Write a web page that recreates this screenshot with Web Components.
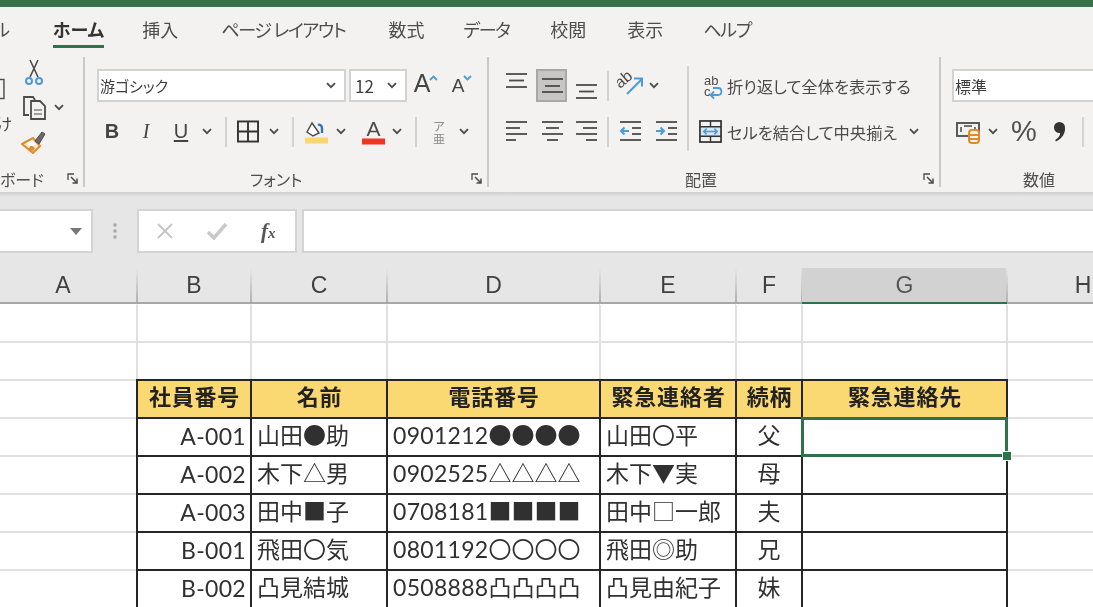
<!DOCTYPE html>
<html lang="ja"><head><meta charset="utf-8"><title>Excel</title>
<style>
html,body{margin:0;padding:0;background:#fff;overflow:hidden}
body{font-family:"Noto Sans CJK JP","Noto Sans",sans-serif;color:#444;width:1093px;height:607px;font-feature-settings:"palt"}
</style></head><body>
<xl-app>
  <xl-tabs>
    <xl-tab ml="-7">ル</xl-tab><xl-tab ml="43" active>ホーム</xl-tab><xl-tab ml="38">挿入</xl-tab><xl-tab ml="43" style="letter-spacing:-1.300px">ページ レイアウト</xl-tab><xl-tab ml="43">数式</xl-tab><xl-tab ml="39" style="letter-spacing:-1.5px">データ</xl-tab><xl-tab ml="41">校閲</xl-tab><xl-tab ml="41">表示</xl-tab><xl-tab ml="40" style="letter-spacing:-1.300px">ヘルプ</xl-tab>
  </xl-tabs>
  <xl-ribbon>
    <xl-group w="83" label="ボード" lx="0">
      <xl-row style="margin-top:-13px;align-items:flex-start">
        <xl-stack w="19">
          <xl-tool w="19" h="66" icon="paste" style="justify-content:flex-start"></xl-tool>
          <xl-tool w="19" h="30" style="justify-content:flex-end;margin-top:-14px"><span style="font-size:16px;margin-right:7px">け</span></xl-tool>
        </xl-stack>
        <xl-stack w="30">
          <xl-tool w="30" h="34" icon="scissors"></xl-tool>
          <xl-tool w="30" h="35" icon="copy"></xl-tool>
          <xl-tool w="30" h="34" icon="brush"></xl-tool>
        </xl-stack>
        <xl-tool w="10" h="35" icon="chev" style="margin-top:34px;margin-left:5px"></xl-tool>
      </xl-row>
    </xl-group>
    <xl-sep kind="group"></xl-sep>
    <xl-group w="402" label="フォント" lx="165">
      <xl-row>
        <xl-field w="249" ml="12" tight style="font-size:15px" chev>游ゴシック</xl-field>
        <xl-field w="58" ml="3" style="font-size:17px" chev>12</xl-field>
        <xl-tool w="36"><span style="font:25px 'Liberation Sans';margin:-4px 0 0 2px">A</span><xl-icon name="up"></xl-icon></xl-tool>
        <xl-tool w="36"><span style="font:19px 'Liberation Sans';margin:1px 0 0 2px">A</span><xl-icon name="down"></xl-icon></xl-tool>
      </xl-row>
      <xl-row>
        <xl-tool w="34" ml="10"><b style="font:bold 20px 'Liberation Sans'">B</b></xl-tool>
        <xl-tool w="34"><i style="font:italic 20px 'Liberation Serif'">I</i></xl-tool>
        <xl-tool w="36"><u style="font:20px 'Liberation Sans';text-underline-offset:2px">U</u></xl-tool>
        <xl-tool w="16" icon="chev"></xl-tool>
        <xl-tool w="8" ml="7"><xl-sep></xl-sep></xl-tool>
        <xl-tool w="22" ml="7" icon="borders"></xl-tool>
        <xl-tool w="30" icon="chev"></xl-tool>
        <xl-tool w="8"><xl-sep></xl-sep></xl-tool>
        <xl-tool w="38" icon="fill"></xl-tool>
        <xl-tool w="12" icon="chev"></xl-tool>
        <xl-tool w="36" ml="8" icon="color"></xl-tool>
        <xl-tool w="12" icon="chev"></xl-tool>
        <xl-tool w="8" ml="9"><xl-sep></xl-sep></xl-tool>
        <xl-tool w="30" ml="4"><span style="display:flex;flex-direction:column;align-items:center;font-size:12px;line-height:13px;color:#8a8a8a"><span>ア</span><span>亜</span></span></xl-tool>
        <xl-tool w="12" ml="4" icon="chev"></xl-tool>
      </xl-row>
    </xl-group>
    <xl-sep kind="group"></xl-sep>
    <xl-group w="450" label="配置" lx="196">
      <xl-row style="align-items:flex-start">
        <xl-stack w="198" gap="13">
          <xl-row>
            <xl-tool w="30" ml="12" icon="vtop"></xl-tool>
            <xl-tool w="31" ml="5" icon="vmid" sel></xl-tool>
            <xl-tool w="30" ml="4" icon="vbot"></xl-tool>
            <xl-tool w="8" ml="3"><xl-sep></xl-sep></xl-tool>
            <xl-tool w="30" ml="5" icon="orient"></xl-tool>
            <xl-tool w="12" ml="1" icon="chev"></xl-tool>
          </xl-row>
          <xl-row>
            <xl-tool w="30" ml="12" icon="hleft"></xl-tool>
            <xl-tool w="31" ml="5" icon="hmid"></xl-tool>
            <xl-tool w="30" ml="4" icon="hright"></xl-tool>
            <xl-tool w="8" ml="3"><xl-sep></xl-sep></xl-tool>
            <xl-tool w="30" ml="3" icon="outdent"></xl-tool>
            <xl-tool w="30" ml="6" icon="indent"></xl-tool>
          </xl-row>
        </xl-stack>
        <xl-sep kind="tall"></xl-sep>
        <xl-stack w="240" gap="13">
          <xl-row>
            <xl-tool w="28" ml="9" icon="wrap"></xl-tool>
            <xl-label ml="1">折り返して全体を表示する</xl-label>
          </xl-row>
          <xl-row>
            <xl-tool w="28" ml="7" icon="merge"></xl-tool>
            <xl-label ml="3">セルを結合して中央揃え</xl-label>
            <xl-tool w="12" ml="11" icon="chev"></xl-tool>
          </xl-row>
        </xl-stack>
      </xl-row>
    </xl-group>
    <xl-sep kind="group"></xl-sep>
    <xl-group w="152" label="数値" lx="82" nolaunch>
      <xl-row>
        <xl-field w="200" ml="11" tight style="font-size:16px">標準</xl-field>
      </xl-row>
      <xl-row>
        <xl-tool w="26" ml="15" icon="money"></xl-tool>
        <xl-tool w="12" ml="5" icon="chev"></xl-tool>
        <xl-tool w="36" ml="7"><span style="font:29px 'Liberation Sans';color:#505050">%</span></xl-tool>
        <xl-tool w="28" ml="4" icon="comma"></xl-tool>
        <xl-tool w="8" ml="5"><xl-sep></xl-sep></xl-tool>
      </xl-row>
    </xl-group>
  </xl-ribbon>
  <xl-formula></xl-formula>
  <xl-colhead></xl-colhead>
  <xl-sheet>
    <xl-cell></xl-cell><xl-cell></xl-cell><xl-cell></xl-cell><xl-cell></xl-cell><xl-cell></xl-cell><xl-cell></xl-cell><xl-cell></xl-cell><xl-cell></xl-cell>
    <xl-cell></xl-cell><xl-cell></xl-cell><xl-cell></xl-cell><xl-cell></xl-cell><xl-cell></xl-cell><xl-cell></xl-cell><xl-cell></xl-cell><xl-cell></xl-cell>

    <xl-cell></xl-cell><xl-cell k="h">社員番号</xl-cell><xl-cell k="h">名前</xl-cell><xl-cell k="h">電話番号</xl-cell><xl-cell k="h">緊急連絡者</xl-cell><xl-cell k="h">続柄</xl-cell><xl-cell k="h">緊急連絡先</xl-cell><xl-cell></xl-cell>

    <xl-cell></xl-cell><xl-cell k="r"><xl-d>A-001</xl-d></xl-cell><xl-cell k="l">山田●助</xl-cell><xl-cell k="l"><xl-d>0901212</xl-d>●●●●</xl-cell><xl-cell k="l">山田〇平</xl-cell><xl-cell k="c">父</xl-cell><xl-cell k="l" selected></xl-cell><xl-cell></xl-cell>
    <xl-cell></xl-cell><xl-cell k="r"><xl-d>A-002</xl-d></xl-cell><xl-cell k="l">木下△男</xl-cell><xl-cell k="l"><xl-d>0902525</xl-d>△△△△</xl-cell><xl-cell k="l">木下▼実</xl-cell><xl-cell k="c">母</xl-cell><xl-cell k="l"></xl-cell><xl-cell></xl-cell>
    <xl-cell></xl-cell><xl-cell k="r"><xl-d>A-003</xl-d></xl-cell><xl-cell k="l">田中■子</xl-cell><xl-cell k="l"><xl-d>0708181</xl-d>■■■■</xl-cell><xl-cell k="l">田中□一郎</xl-cell><xl-cell k="c">夫</xl-cell><xl-cell k="l"></xl-cell><xl-cell></xl-cell>
    <xl-cell></xl-cell><xl-cell k="r"><xl-d>B-001</xl-d></xl-cell><xl-cell k="l">飛田〇気</xl-cell><xl-cell k="l"><xl-d>0801192</xl-d>〇〇〇〇</xl-cell><xl-cell k="l">飛田◎助</xl-cell><xl-cell k="c">兄</xl-cell><xl-cell k="l"></xl-cell><xl-cell></xl-cell>
    <xl-cell></xl-cell><xl-cell k="r"><xl-d>B-002</xl-d></xl-cell><xl-cell k="l">凸見結城</xl-cell><xl-cell k="l"><xl-d>0508888</xl-d>凸凸凸凸</xl-cell><xl-cell k="l">凸見由紀子</xl-cell><xl-cell k="c">妹</xl-cell><xl-cell k="l"></xl-cell><xl-cell></xl-cell>
  </xl-sheet>
</xl-app>
<script>
const L='#4b4b4b',B='#4a9bd8',O='#e08a2c';
const lines=(ys)=>ys.map(([x1,x2,y])=>`<path d="M${x1} ${y}H${x2}"/>`).join('');
const svg=(w,h,body,extra='')=>`<svg width="${w}" height="${h}" viewBox="0 0 ${w} ${h}" fill="none" stroke="${L}" stroke-width="1.8" ${extra}>${body}</svg>`;
const ICONS={
 chev:svg(10,7,'<path d="M1 1.2l4 4 4-4"/>'),
 up:svg(9,6,`<path d="M1 5l3.5-3.5L8 5" stroke="${B}"/>`),
 down:svg(9,6,`<path d="M1 1l3.5 3.500L8 1" stroke="${B}"/>`),
 paste:svg(24,26,'<rect x="-16" y="1" width="21" height="24"/>'),
 scissors:svg(20,28,`<path d="M6 1l8 17M14 1L6 18" stroke-width="1.6"/><circle cx="5" cy="22" r="3" stroke="${B}" stroke-width="2"/><circle cx="15" cy="22" r="3" stroke="${B}" stroke-width="2"/>`),
 copy:svg(25,25,'<path d="M7 20H2V2h9l2 3"/><path d="M9 6h9l5 5v13H9z" fill="#f3f2f1"/><path d="M12 15h8M12 19h8" stroke-width="1.2"/>'),
 brush:svg(26,24,`<path d="M1 14l11-6 7 8-7 7z" fill="#f6e7d3" stroke="${O}" stroke-width="2"/><path d="M7 20l3-5 4 3-2 3z" fill="${O}" stroke="none"/><path d="M5 13.500l6-3.500 4 5-5 1z" fill="#fff" stroke="none"/><path d="M14 11l7-9 3 2-6 10z" fill="#6a6a6a" stroke="${L}" stroke-width="1"/>`),
 borders:svg(23,23,'<rect x="1" y="1" width="21" height="21" stroke="#333" stroke-width="2"/><path d="M11.5 1v21M1 11.5h21" stroke="#333" stroke-width="2"/>'),
 fill:svg(25,24,`<path d="M8 3L3 12l6 4 6-3z" stroke-width="1.5" fill="#fff"/><path d="M18 13V8c0-2-2-4-4-3" stroke="#2f74b5" stroke-width="2.4"/><rect x="1" y="17.5" width="23" height="6" fill="#fad671" stroke="none"/>`),
 color:`<svg width="25" height="26" viewBox="0 0 25 26" fill="${L}" style="overflow:visible"><text x="12.5" y="17" text-anchor="middle" font-family="Liberation Sans" font-size="21" stroke="none">A</text><rect x="1" y="19.5" width="23" height="6" fill="#ee3524"/></svg>`,
 vtop:svg(22,30,lines([[1,22,3],[4,19,9.5],[1,22,16]])),
 vmid:svg(22,30,lines([[1,22,8],[4,19,15],[1,22,21]])),
 vbot:svg(22,30,lines([[1,22,14],[4,19,20.5],[1,22,27]])),
 hleft:svg(22,30,lines([[1,22,5],[1,15,11],[1,22,17],[1,11,23]])),
 hmid:svg(22,30,lines([[1,22,5],[5,18,11],[1,22,17],[6,17,23]])),
 hright:svg(22,30,lines([[1,22,5],[8,22,11],[1,22,17],[11,22,23]])),
 outdent:svg(22,30,lines([[1,22,5],[13,22,11],[13,22,17],[1,22,23]])+`<path d="M10 14H2M5.5 10.5L2 14l3.500 3.500" stroke="${B}" stroke-width="2"/>`),
 indent:svg(22,30,lines([[1,22,5],[13,22,11],[13,22,17],[1,22,23]])+`<path d="M1 14h8M5.500 10.500L9 14l-3.500 3.500" stroke="${B}" stroke-width="2"/>`),
 orient:`<svg width="26" height="28" viewBox="0 0 26 28" fill="none" style="overflow:visible"><text transform="translate(1 17) rotate(-40)" font-family="Liberation Sans" font-size="16" fill="${L}">ab</text><path d="M8 22L23 7M15 6.500h8v8" stroke="${B}" stroke-width="2"/></svg>`,
 wrap:`<svg width="24" height="28" viewBox="0 0 24 28" fill="none" style="overflow:visible"><text x="4" y="13" font-family="Liberation Sans" font-size="13" fill="${L}">ab</text><text x="4" y="24" font-family="Liberation Sans" font-size="13" fill="${L}">c</text><path d="M11 23h7c4.500 0 4.500-7 0-7h-5M14 19.500L10.500 23l3.500 3.500" stroke="${B}" stroke-width="1.800"/></svg>`,
 merge:`<svg width="23" height="23" viewBox="0 0 24 24" fill="none"><rect x="2" y="7" width="20" height="11" fill="#d4e8f8"/><rect x="1" y="1" width="22" height="22" stroke="#333" stroke-width="1.800"/><path d="M1 7h22M1 17h22M12 1v6M12 17v6" stroke="#333" stroke-width="1.500"/><path d="M5 12h14M8 9l-3 3 3 3M16 9l3 3-3 3" stroke="${B}" stroke-width="1.600"/></svg>`,
 money:svg(26,24,`<rect x="1" y="3" width="22" height="13" stroke="${L}"/><path d="M5 7v5M19 7v5M8 6h8" stroke-width="1.500"/><rect x="13" y="10" width="10" height="13" rx="3" fill="#f3f2f1" stroke="${O}" stroke-width="2"/><path d="M14 15h8M14 19h8" stroke="${O}" stroke-width="1.800"/>`),
 comma:`<svg width="14" height="21" viewBox="0 0 14 21"><circle cx="6.500" cy="6.500" r="5.500" fill="#333"/><path d="M12 6.500c.5 6-3 11-9 14l-.8-1.500c3.500-2 5.300-5 5-8z" fill="#333"/></svg>`,
 launch:svg(12,12,'<path d="M1 7V1h6" stroke-width="1.300"/><path d="M4 4l6 6M10 5.500V10H5.500" stroke-width="1.500"/>'),
};
function shadow(el,html){el.attachShadow({mode:'open'}).innerHTML=html;}
function def(name,fn){customElements.define(name,class extends HTMLElement{constructor(){super();}connectedCallback(){if(!this.shadowRoot)fn(this);}});}
const COLS='148px 114px 136px 213px 136px 66px 205px 152px';

def('xl-app',el=>shadow(el,`<style>:host{display:flex;flex-direction:column;width:1093px;height:607px;overflow:hidden;background:#f3f2f1;filter:blur(.5px);border-top:7px solid #38704a;box-sizing:border-box}</style><slot></slot>`));
def('xl-tabs',el=>shadow(el,`<style>:host{display:flex;flex:none;height:43px;box-sizing:border-box;padding-top:10px;align-items:flex-start;background:#f3f2f1;overflow:hidden;white-space:nowrap}</style><slot></slot>`));
def('xl-tab',el=>{const a=el.hasAttribute('active');shadow(el,`<style>:host{display:block;flex:none;margin-left:${el.getAttribute('ml')||0}px;font-size:18px;line-height:24px;color:${a?'#333':'#4d4d4d'};font-weight:${a?700:400};padding-bottom:4px;border-bottom:3px solid ${a?'#2e7249':'transparent'}}</style><slot></slot>`)});
def('xl-ribbon',el=>shadow(el,`<style>:host{display:flex;flex:none;height:142px;background:#f3f2f1;overflow:hidden}</style><slot></slot>`));
def('xl-group',el=>{const n=el.hasAttribute('nolaunch');shadow(el,`<style>:host{display:flex;flex-direction:column;flex:none;width:${el.getAttribute('w')}px;height:142px;overflow:hidden}
.c{display:flex;flex-direction:column;gap:13px;height:117px;box-sizing:border-box;padding-top:19px}
.f{display:flex;align-items:center;height:24px;font-size:16px;color:#4d4d4d}
.l{margin-left:${el.getAttribute('lx')}px;white-space:nowrap}
.k{margin-left:auto;margin-right:4px;display:${n?'none':'flex'}}</style>
<div class="c"><slot></slot></div><div class="f"><span class="l">${el.getAttribute('label')}</span><span class="k">${ICONS.launch}</span></div>`)});
def('xl-row',el=>shadow(el,`<style>:host{display:flex;flex:none;align-items:center;height:33px}</style><slot></slot>`));
def('xl-stack',el=>shadow(el,`<style>:host{display:flex;flex-direction:column;flex:none;width:${el.getAttribute('w')}px;gap:${el.getAttribute('gap')||0}px}</style><slot></slot>`));
def('xl-sep',el=>{const k=el.getAttribute('kind');
 const s=k==='group'?'width:2px;height:130px;margin-top:7px;background:#c9c9c9':k==='tall'?'width:2px;height:85px;margin-top:-3px;background:#d2d2d2':'width:2px;height:30px;background:#d2d2d2';
 shadow(el,`<style>:host{display:block;flex:none;${s}}</style>`)});
def('xl-icon',el=>shadow(el,`<style>:host{display:inline-flex;flex:none;align-self:flex-start;margin-top:6px;margin-left:-1px}</style>${ICONS[el.getAttribute('name')]}`));
def('xl-d',el=>shadow(el,`<style>:host{display:inline;font-family:Lato,"Noto Sans",sans-serif;letter-spacing:.3px}</style><slot></slot>`));
def('xl-tool',el=>{const w=el.getAttribute('w'),h=el.getAttribute('h')||33,ml=el.getAttribute('ml')||0,ic=el.getAttribute('icon'),sel=el.hasAttribute('sel');
 shadow(el,`<style>:host{display:flex;flex:none;align-items:center;justify-content:center;width:${w}px;height:${h}px;margin-left:${ml}px;box-sizing:border-box;overflow:hidden;color:#444;${sel?'background:#c8c6c4;border:2px solid #a9a8a6;':''}}
 svg{display:block}</style>${ic?ICONS[ic]:''}<slot></slot>`)});
def('xl-field',el=>shadow(el,`<style>:host{display:flex;flex:none;align-items:center;justify-content:space-between;box-sizing:border-box;width:${el.getAttribute('w')}px;height:33px;margin-left:${el.getAttribute('ml')||0}px;background:#fff;border:2px solid #d2d2d2;padding:0 8px 0 ${el.hasAttribute('tight')?1:2}px;color:#3d3d3d;white-space:nowrap}
 span{margin-left:${el.hasAttribute('tight')?0:2}px}</style><span><slot></slot></span>${el.hasAttribute('chev')?ICONS.chev:''}`));
def('xl-label',el=>shadow(el,`<style>:host{display:block;flex:none;margin-left:${el.getAttribute('ml')||0}px;font-size:16.300px;color:#4a4a4a;white-space:nowrap}</style><slot></slot>`));
def('xl-formula',el=>shadow(el,`<style>:host{display:flex;flex:none;height:76px;box-sizing:border-box;padding-top:17px;align-items:flex-start;background:linear-gradient(#cfcfcf,#e6e6e6 5px);overflow:hidden}
.b{box-sizing:border-box;height:44px;background:#fff;border:2px solid #d4d4d4;display:flex;align-items:center}
.n{width:93px;border-left:0;justify-content:flex-end;padding-right:9px}
.d{width:44px;height:44px;display:flex;flex-direction:column;align-items:center;justify-content:center;gap:4px}
.d i{width:2px;height:2px;background:#a6a6a6;display:block;box-shadow:0 0 0 .5px #a6a6a6}
.f{width:160px;padding-left:17px}
.f span{flex:none;width:50px;display:flex;justify-content:flex-start}
.x{font:italic bold 21px/1 "Liberation Serif";color:#555;margin-left:5px;align-items:baseline;width:20px!important}
.x small{font-size:15px}
.i{flex:1;margin-left:5px;border-right:0}</style>
<div class="b n"><svg width="12" height="7"><path d="M0 0h12L6 7z" fill="#777"/></svg></div>
<div class="d"><i></i><i></i><i></i></div>
<div class="b f"><span><svg width="18" height="18" fill="none" stroke="#c6c6c6" stroke-width="2"><path d="M2 2l14 14M16 2L2 16"/></svg></span><span><svg width="22" height="18" fill="none" stroke="#c9c9c9" stroke-width="3.500"><path d="M2 10l6 6L20 2"/></svg></span><span class="x">f<small>x</small></span></div>
<div class="b i"></div>`));
def('xl-colhead',el=>{const names=['A','B','C','D','E','F','G','H'];
 shadow(el,`<style>:host{display:grid;flex:none;grid-template-columns:${COLS};width:1170px;margin-left:-11px;height:36px;background:#e6e6e6;font:23px "Liberation Sans";color:#404040;overflow:hidden}
 div{display:flex;align-items:center;justify-content:center;box-sizing:border-box;border-bottom:2px solid #a8a8a8;position:relative}
 div.s{background:#d2d2d2;color:#555;border-bottom-color:#2e7249}
 div:not(:last-child)::after{content:"";position:absolute;right:-1px;top:0;bottom:0;width:2px;background:linear-gradient(#e6e6e6,#b2b2b2)}</style>`+names.map(n=>`<div class="${n==='G'?'s':''}">${n}</div>`).join(''))});
def('xl-sheet',el=>shadow(el,`<style>:host{display:grid;flex:1;min-height:0;grid-template-columns:${COLS};width:1170px;margin-left:-11px;grid-auto-rows:38px;background:#fff;overflow:hidden;font-size:23px;color:#303030;white-space:nowrap}</style><slot></slot>`));
def('xl-cell',el=>{const k=el.getAttribute('k'),sel=el.hasAttribute('selected');
 const t=k?'box-shadow:inset 0 0 0 1px #262626,0 0 0 1px #262626;':'box-shadow:1px 1px 0 #e0e0e0,inset -1px -1px 0 #e0e0e0;';
 const a={h:'justify-content:center;background:#fbd972;font-weight:700;font-size:22px;letter-spacing:.8px;color:#222;padding:0 0 8px 1px;',r:'justify-content:flex-end;padding:0 5px 5px 0;background:#fff;',l:'padding:0 0 6px 6px;background:#fff;',c:'justify-content:center;padding-bottom:6px;background:#fff;'}[k]||'';
 shadow(el,`<style>:host{display:flex;align-items:center;box-sizing:border-box;min-width:0;position:relative;${t}${a}${sel?'z-index:2;':''}font-feature-settings:normal}
 .t{display:block}
 .s{position:absolute;inset:-1px -1px -1px -1px;border:3px solid #2e7249}
 .h{position:absolute;right:-5px;bottom:-5px;width:8px;height:8px;background:#2e7249;border:1px solid #fff}</style><span class="t"><slot></slot></span>${sel?'<div class="s"></div><div class="h"></div>':''}`)});
</script>
</body></html>
